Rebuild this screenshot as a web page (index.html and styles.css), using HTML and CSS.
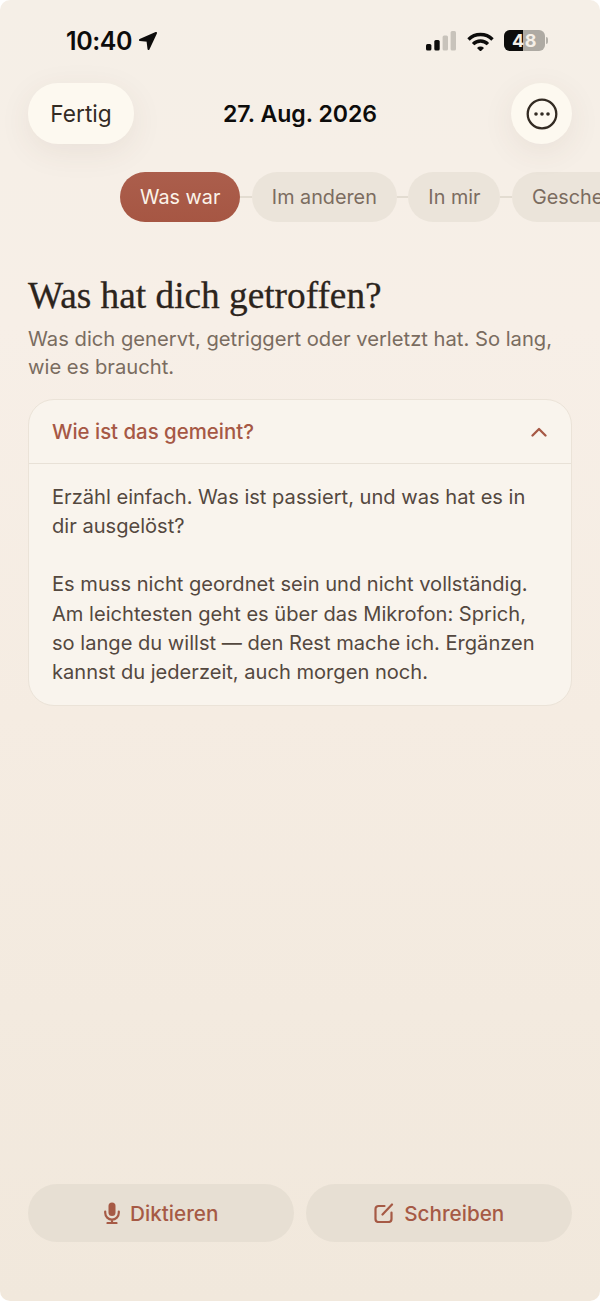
FILE: index.html
```html
<!DOCTYPE html>
<html lang="de">
<head>
<meta charset="utf-8">
<title>Was hat dich getroffen?</title>
<link rel="stylesheet" href="styles.css">
</head>
<body>
<div class="screen">
  <div class="status">
    <div class="status-left">
      <span class="time">10:40</span>
      <svg class="loc" viewBox="0 0 20 20"><path d="M18 2 2 9l7.500.8L10.500 18z"/></svg>
    </div>
    <div class="status-right">
      <svg class="signal" viewBox="0 0 31 20"><rect x="1" y="13" width="5.400" height="6.500" rx="1.500"/><rect x="9.300" y="9" width="5.400" height="10.500" rx="1.500"/><rect class="dim" x="17.600" y="4.500" width="5.400" height="15" rx="1.500"/><rect class="dim" x="25.600" y="0" width="5.400" height="19.500" rx="1.500"/></svg>
      <svg class="wifi" viewBox="0 0 27 20"><path class="arc" d="M1.500 8.500a17 17 0 0 1 24 0"/><path class="arc" d="M6.080 13.080a10.500 10.500 0 0 1 14.840 0"/><path d="M13.500 20.500 10 17a5 5 0 0 1 7 0z"/></svg>
      <div class="battery"><div class="battery-body"><span class="battery-fill"></span><span class="battery-num">48</span></div><span class="battery-cap"></span></div>
    </div>
  </div>

  <header class="topbar">
    <button class="done">Fertig</button>
    <div class="date">27. Aug. 2026</div>
    <button class="more" aria-label="Mehr">
      <svg viewBox="0 0 32 32"><circle class="ring" cx="16" cy="16" r="14.300"/><circle cx="10" cy="16" r="1.800"/><circle cx="16" cy="16" r="1.800"/><circle cx="22" cy="16" r="1.800"/></svg>
    </button>
  </header>

  <nav class="steps">
    <span class="step active">Was war</span><span class="link"></span>
    <span class="step">Im anderen</span><span class="link"></span>
    <span class="step">In mir</span><span class="link"></span>
    <span class="step">Geschenk</span>
  </nav>

  <main class="content">
    <h1>Was hat dich getroffen?</h1>
    <p class="lead">Was dich genervt, getriggert oder verletzt hat. So lang, wie es braucht.</p>
    <section class="card">
      <div class="card-head">
        <span>Wie ist das gemeint?</span>
        <svg class="chev" viewBox="0 0 16 10"><path d="M1.500 8.500 8 2l6.500 6.500"/></svg>
      </div>
      <div class="card-body">
        <p>Erzähl einfach. Was ist passiert, und was hat es in dir ausgelöst?</p>
        <p>Es muss nicht geordnet sein und nicht vollständig. Am leichtesten geht es über das Mikrofon: Sprich, so lange du willst — den Rest mache ich. Ergänzen kannst du jederzeit, auch morgen noch.</p>
      </div>
    </section>
  </main>

  <footer class="actions">
    <button class="action">
      <svg class="ico ico-mic" viewBox="0 0 16 22"><rect class="fill" x="4.500" y="0.500" width="7" height="13.500" rx="3.500"/><path d="M1.200 9.500v1.300a6.800 6.800 0 0 0 13.600 0V9.500M8 17.600V21M3.500 21h9"/></svg>
      Diktieren
    </button>
    <button class="action">
      <svg class="ico ico-write" viewBox="0 0 20 20"><path d="M10.500 3H4.500A3 3 0 0 0 1.500 6v10a3 3 0 0 0 3 3h10a3 3 0 0 0 3-3V9.500M8.500 11.500 18 1.500"/></svg>
      Schreiben
    </button>
  </footer>
</div>
</body>
</html>
```
FILE: styles.css
```css
* { box-sizing: border-box; }
html, body { margin: 0; padding: 0; background: #fff; }
body { width: 600px; height: 1301px; overflow: hidden; font-family: Inter, "Liberation Sans", sans-serif; }
button { font-family: inherit; border: 0; padding: 0; }

.screen {
  width: 600px; height: 1301px; border-radius: 10px; overflow: hidden;
  display: flex; flex-direction: column;
  background: linear-gradient(180deg, #f5efe7 0%, #f7efe7 25%, #f5ece2 55%, #f1e8dc 100%);
}

.status { height: 83px; padding: 27px 52px 0 66px; display: flex; justify-content: space-between; align-items: flex-start; }
.status-left { display: flex; align-items: center; gap: 6px; }
.time { font-size: 25px; line-height: 28px; font-weight: 600; color: #0d0c0b; letter-spacing: -.4px; }
.loc { width: 20px; height: 20px; fill: #0d0c0b; stroke: #0d0c0b; stroke-width: 2; stroke-linejoin: round; }
.status-right { display: flex; align-items: center; gap: 10px; padding-top: 3px; }
.signal { width: 31px; height: 20px; fill: #0d0c0b; margin-right: 1px; }
.signal .dim { fill: #c8c3bb; }
.wifi { width: 27px; height: 20px; fill: #0d0c0b; }
.wifi .arc { fill: none; stroke: #0d0c0b; stroke-width: 3.400; }
.battery { display: flex; align-items: center; gap: 1px; }
.battery-body { position: relative; width: 41px; height: 21px; border-radius: 6px; background: #aeaaa3; overflow: hidden; display: flex; align-items: center; justify-content: center; }
.battery-fill { position: absolute; left: 0; top: 0; bottom: 0; width: 19px; background: #0d0c0b; }
.battery-num { position: relative; font-size: 18px; line-height: 21px; font-weight: 700; color: #f5efe7; letter-spacing: .5px; }
.battery-cap { width: 2px; height: 7px; border-radius: 0 2px 2px 0; background: #b5b1aa; }

.topbar { height: 61px; margin: 0 28px; display: flex; justify-content: space-between; align-items: center; position: relative; }
.done { width: 106px; height: 61px; border-radius: 30px; background: #fdf9f0; color: #332b23; font-size: 22.700px; box-shadow: 0 8px 32px rgba(90, 70, 50, .08); }
.date { position: absolute; left: 195px; top: 16px; font-size: 23.050px; line-height: 30px; font-weight: 600; color: #0d0c0b; }
.more { width: 61px; height: 61px; border-radius: 50%; background: #fdf9f0; box-shadow: 0 8px 32px rgba(90, 70, 50, .08); display: flex; align-items: center; justify-content: center; }
.more svg { width: 32px; height: 32px; fill: #332b23; }
.more .ring { fill: none; stroke: #332b23; stroke-width: 2.300; }

.steps { margin-top: 28px; padding-left: 120px; height: 50px; display: flex; align-items: center; white-space: nowrap; overflow: hidden; flex: none; }
.step { flex: none; height: 50px; line-height: 50px; padding: 0 20px; border-radius: 25px; font-size: 19.800px; color: #7b6c60; background: #ebe4da; }
.step.active { background: linear-gradient(180deg, #ab5e4c, #a65643); color: #fbf3e9; }
.link { flex: none; width: 11.500px; height: 2px; background: #e3dcd1; }

.content { padding: 0 28px; flex: 1; }
h1 { margin: 53px 0 0; font-family: "Liberation Serif", serif; font-weight: 400; font-size: 37.300px; line-height: 42px; color: #2c241c; -webkit-text-stroke: .3px #2c241c; }
.lead { margin: 8px 0 0; font-size: 20.200px; line-height: 28px; color: #7a6c60; }
.card { margin-top: 18px; border: 1px solid #ebe3d8; border-radius: 26px; background: #f9f4ed; }
.card-head { height: 64px; padding: 0 23px; display: flex; align-items: center; justify-content: space-between; border-bottom: 1px solid #e8e1d7; font-size: 20.400px; font-weight: 500; color: #a65845; }
.chev { width: 16px; height: 10px; fill: none; stroke: #a65845; stroke-width: 2.300; stroke-linecap: round; stroke-linejoin: round; margin-right: 1px; }
.card-body { padding: 18.500px 23px 17.500px; font-size: 20.100px; line-height: 29.300px; color: #54483f; }
.card-body p { margin: 0; }
.card-body p + p { margin-top: 29.300px; }

.actions { padding: 0 28px 59px; display: flex; gap: 12px; }
.action { flex: 1; height: 58px; border-radius: 29px; background: #e7dfd3; color: #a65a45; font-size: 20.700px; font-weight: 500; display: flex; align-items: center; justify-content: center; gap: 10.500px; }
.ico { fill: none; stroke: #a65a45; stroke-width: 2.200; stroke-linecap: round; stroke-linejoin: round; }
.ico-mic { width: 16px; height: 22px; }
.ico-write { width: 20px; height: 20px; }
.ico .fill { fill: #a65a45; stroke: none; }
```
